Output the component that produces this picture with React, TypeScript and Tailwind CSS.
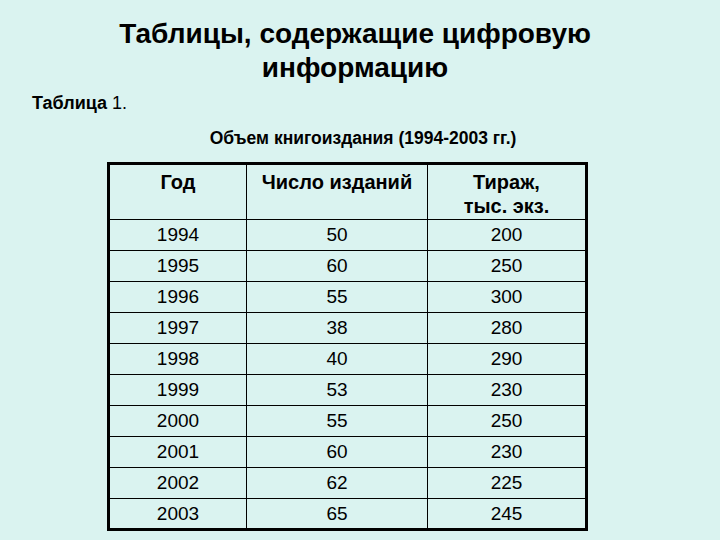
import React from 'react';

const rows: [string, string, string][] = [
  ['1994', '50', '200'],
  ['1995', '60', '250'],
  ['1996', '55', '300'],
  ['1997', '38', '280'],
  ['1998', '40', '290'],
  ['1999', '53', '230'],
  ['2000', '55', '250'],
  ['2001', '60', '230'],
  ['2002', '62', '225'],
  ['2003', '65', '245'],
];

const App: React.FC = () => {
  return (
    <div
      className="w-[720px] h-[540px] overflow-hidden bg-[#daf3f0] text-black"
      style={{ fontFamily: '"Liberation Sans", Arial, sans-serif' }}
    >
      <h1 className="pt-[17px] mr-[10px] text-center text-[28px] leading-[34px] font-bold">
        Таблицы, содержащие цифровую
        <br />
        информацию
      </h1>
      <p className="mt-[8px] ml-[32px] text-[18px] leading-[20px]">
        <span className="font-bold">Таблица</span> 1.
      </p>
      <p className="mt-[15px] ml-[6px] text-center text-[17.5px] leading-[20px] font-bold">
        Объем книгоиздания (1994-2003 гг.)
      </p>
      <table className="mt-[14px] ml-[107px] w-[481px] border-collapse border-[3px] border-black text-[19px]">
        <colgroup>
          <col className="w-[139px]" />
          <col className="w-[182px]" />
          <col className="w-[160px]" />
        </colgroup>
        <thead>
          <tr className="h-[56px]">
            <th className="border border-black align-top pt-[5px] text-[20px] font-bold leading-[24px]">Год</th>
            <th className="border border-black align-top pt-[5px] text-[20px] font-bold leading-[24px]">Число изданий</th>
            <th className="border border-black align-top pt-[5px] text-[20px] font-bold leading-[24px]">
              Тираж,
              <br />
              тыс. экз.
            </th>
          </tr>
        </thead>
        <tbody>
          {rows.map(([year, count, copies]) => (
            <tr key={year} className="h-[31px]">
              <td className="border border-black text-center leading-[22px] p-0">{year}</td>
              <td className="border border-black text-center leading-[22px] p-0">{count}</td>
              <td className="border border-black text-center leading-[22px] p-0">{copies}</td>
            </tr>
          ))}
        </tbody>
      </table>
    </div>
  );
};

export default App;
